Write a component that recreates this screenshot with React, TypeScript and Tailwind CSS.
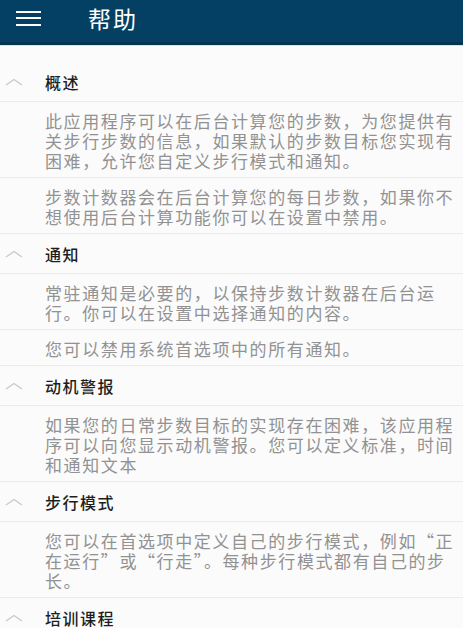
// Help page: dark header, then sections of title + paragraphs.
const SECTIONS = [
  {
    title: '概述',
    paras: [
      '此应用程序可以在后台计算您的步数，为您提供有关步行步数的信息，如果默认的步数目标您实现有困难，允许您自定义步行模式和通知。',
      '步数计数器会在后台计算您的每日步数，如果你不想使用后台计算功能你可以在设置中禁用。',
    ],
  },
  {
    title: '通知',
    paras: [
      '常驻通知是必要的，以保持步数计数器在后台运行。你可以在设置中选择通知的内容。',
      '您可以禁用系统首选项中的所有通知。',
    ],
  },
  {
    title: '动机警报',
    paras: ['如果您的日常步数目标的实现存在困难，该应用程序可以向您显示动机警报。您可以定义标准，时间和通知文本'],
  },
  {
    title: '步行模式',
    paras: ['您可以在首选项中定义自己的步行模式，例如“正在运行”或“行走”。每种步行模式都有自己的步长。'],
  },
  { title: '培训课程', paras: [] },
];

function Chevron() {
  return (
    <svg width="18" height="8" viewBox="0 0 18 8" className="ml-[5px] shrink-0" fill="none">
      <polyline points="1,7 9,1.5 17,7" stroke="#c9c9c9" strokeWidth="1.3" strokeLinejoin="round" />
    </svg>
  );
}

export default function App() {
  return (
    <div
      className="h-[628px] w-[463px] overflow-hidden bg-[#fbfbfb]"
      style={{ fontFamily: '"Noto Sans CJK SC", "Noto Sans", sans-serif' }}
    >
      {/* Top bar */}
      <header className="h-[45px] bg-[#034063] border-b-[3px] border-[#02344f]">
        <div className="flex h-[36px] items-center">
          <div className="ml-[16px] flex w-[25px] flex-col gap-[4.5px]">
            <span className="h-[2px] bg-white" />
            <span className="h-[2px] bg-white" />
            <span className="h-[2px] bg-white" />
          </div>
          <h1 className="ml-[47px] text-[23px] leading-none tracking-[2px] text-white">帮助</h1>
        </div>
      </header>
      <div className="h-px bg-[#d3e4f1]" />

      <main className="pt-[16px]">
        {SECTIONS.map((s) => (
          <section key={s.title}>
            <div className="flex h-[40px] items-center border-b border-[#ebebeb]">
              <Chevron />
              <span className="ml-[22px] text-[16px] font-medium tracking-[1.5px] text-[#1e1e1e]">{s.title}</span>
            </div>
            {s.paras.map((p, i) => (
              <p
                key={i}
                className="border-b border-[#ebebeb] pl-[45px] pr-[6px] pt-[9px] pb-[6px] text-[17px] leading-[20px] tracking-[1.6px] text-[#929292]"
              >
                {p}
              </p>
            ))}
          </section>
        ))}
      </main>
    </div>
  );
}
